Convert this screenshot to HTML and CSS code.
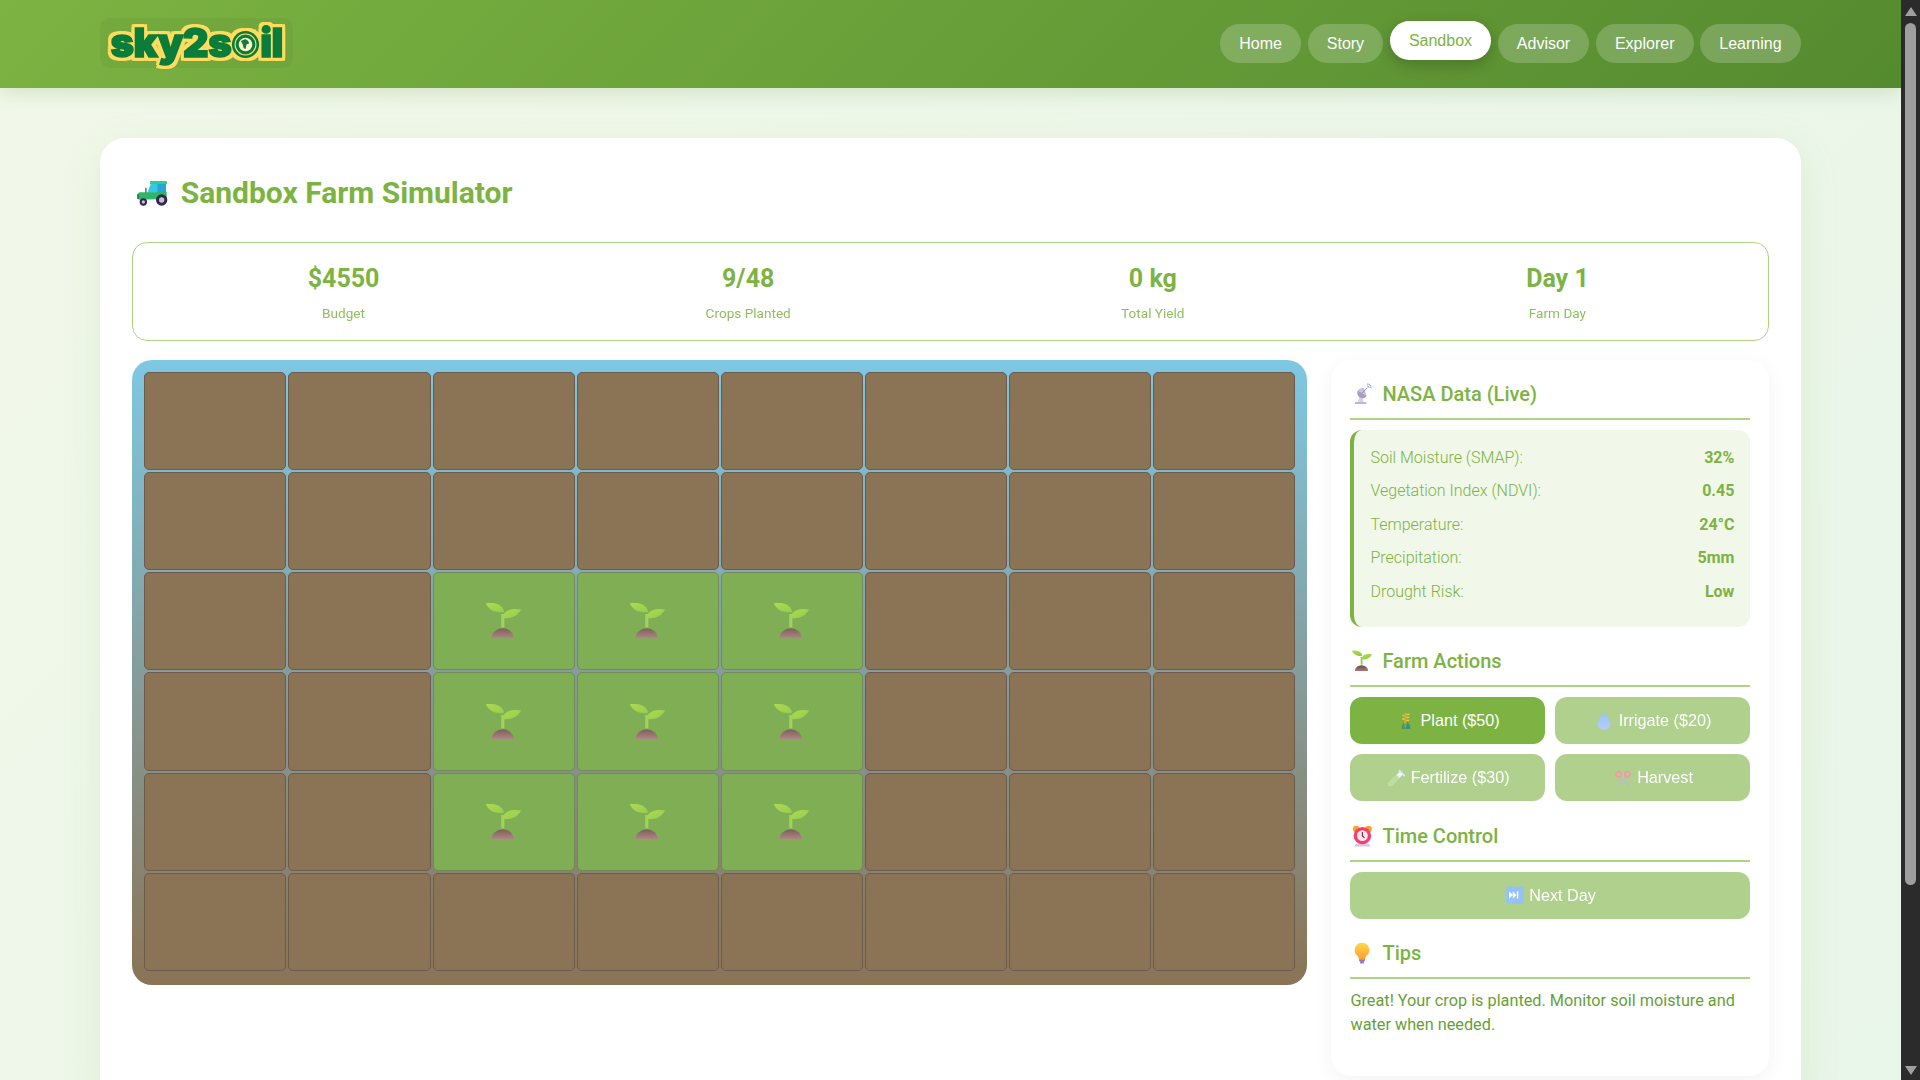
FILE: index.html
```html
<!DOCTYPE html>
<html lang="en">
<head>
<meta charset="utf-8">
<title>sky2soil - Sandbox</title>
<link rel="stylesheet" href="styles.css">
</head>
<body>
<svg class="defs" width="0" height="0" aria-hidden="true">
  <defs>
    <linearGradient id="leaf" x1="0" y1="0" x2="1" y2="1"><stop offset="0" stop-color="#b9e24e"/><stop offset="1" stop-color="#86c440"/></linearGradient>
    <linearGradient id="leafc" x1="0" y1="0" x2="1" y2="1"><stop offset="0" stop-color="#b4e04e"/><stop offset="1" stop-color="#98d050"/></linearGradient>
    <linearGradient id="soil" x1="0" y1="0" x2="0" y2="1"><stop offset="0" stop-color="#6a4a42"/><stop offset="1" stop-color="#a9767c"/></linearGradient>
    <linearGradient id="soilc" x1="0" y1="0" x2="0" y2="1"><stop offset="0" stop-color="#7d5757"/><stop offset="1" stop-color="#b5838e"/></linearGradient>
    <linearGradient id="bulbg" x1="0" y1="0" x2="0" y2="1"><stop offset="0" stop-color="#ffd84d"/><stop offset="1" stop-color="#ff9d2e"/></linearGradient>
    <linearGradient id="dropg" x1="0" y1="0" x2="0" y2="1"><stop offset="0" stop-color="#4aa3ef"/><stop offset="1" stop-color="#8fa8f7"/></linearGradient>
    <g id="seed">
      <path d="M15.2 24.5V11h3.2v13.5z" fill="#8ccb45"/>
      <path d="M0 0C8-1 17 1 18 9 10 10 2 7 0 0Z" fill="url(#leaf)"/>
      <path d="M35 6.5C28 5 18 6 16 15 24 16 31 14 35 6.5Z" fill="url(#leaf)"/>
      <path d="M5 35.3A11.7 11 0 0 1 28.3 35.3Z" fill="url(#soil)"/>
    </g>
    <g id="seedc">
      <path d="M15.2 24.5V11h3.2v13.5z" fill="#a4d65c"/>
      <path d="M0 0C8-1 17 1 18 9 10 10 2 7 0 0Z" fill="url(#leafc)"/>
      <path d="M35 6.5C28 5 18 6 16 15 24 16 31 14 35 6.5Z" fill="url(#leafc)"/>
      <path d="M5 35.3A11.7 11 0 0 1 28.3 35.3Z" fill="url(#soilc)"/>
    </g>
  </defs>
</svg>

<header class="topbar">
  <div class="topbar-inner">
    <a class="logo" aria-label="sky2soil"><span class="logo-text">sky2s<svg class="logo-o" viewBox="0 0 32 32"><circle cx="16" cy="16" r="15" fill="#0a7d3a"/><circle cx="16" cy="16" r="11.5" fill="none" stroke="#ffe070" stroke-width="1.2"/><circle cx="16" cy="16" r="7.5" fill="#fbf4c8"/><path d="M11 12l5-2 3 2 1 3-3 1-1 5-2-1-1-4z" fill="#0a7d3a"/></svg>il</span></a>
    <nav class="nav">
      <a class="nav-link">Home</a>
      <a class="nav-link">Story</a>
      <a class="nav-link is-active">Sandbox</a>
      <a class="nav-link">Advisor</a>
      <a class="nav-link">Explorer</a>
      <a class="nav-link">Learning</a>
    </nav>
  </div>
</header>

<main class="card">
  <h2 class="title">
    <svg class="title-icon" viewBox="0 0 150 120">
      <path d="M45 38h5v16h-5z" fill="#6f7f8f"/>
      <path d="M60 18h50l2 9H60z" fill="#2ecf8e"/>
      <path d="M62 27h46v26H52z" fill="#35c9e8"/>
      <path d="M82 27h26v26H82z" fill="#27a6d8"/>
      <path d="M28 52h52l3-2h27v23H82L28 74 22 70V58z" fill="#2fb56a"/>
      <path d="M22 58h5v14h-5z" fill="#17804f"/>
      <circle cx="95" cy="75" r="17" fill="#332849"/><circle cx="95" cy="75" r="8" fill="#c9bfdc"/>
      <circle cx="40" cy="81" r="11" fill="#332849"/><circle cx="40" cy="81" r="5" fill="#c9bfdc"/>
    </svg>
    Sandbox Farm Simulator
  </h2>

  <section class="stats">
    <div class="stat"><div class="stat-value">$4550</div><div class="stat-label">Budget</div></div>
    <div class="stat"><div class="stat-value">9/48</div><div class="stat-label">Crops Planted</div></div>
    <div class="stat"><div class="stat-value">0 kg</div><div class="stat-label">Total Yield</div></div>
    <div class="stat"><div class="stat-value">Day 1</div><div class="stat-label">Farm Day</div></div>
  </section>

  <div class="workspace">
    <section class="farm">
      <div class="plot"></div><div class="plot"></div><div class="plot"></div><div class="plot"></div><div class="plot"></div><div class="plot"></div><div class="plot"></div><div class="plot"></div>
      <div class="plot"></div><div class="plot"></div><div class="plot"></div><div class="plot"></div><div class="plot"></div><div class="plot"></div><div class="plot"></div><div class="plot"></div>
      <div class="plot"></div><div class="plot"></div>
      <div class="plot is-planted"><svg class="crop" viewBox="0 0 35 36"><use href="#seedc"/></svg></div>
      <div class="plot is-planted"><svg class="crop" viewBox="0 0 35 36"><use href="#seedc"/></svg></div>
      <div class="plot is-planted"><svg class="crop" viewBox="0 0 35 36"><use href="#seedc"/></svg></div>
      <div class="plot"></div><div class="plot"></div><div class="plot"></div>
      <div class="plot"></div><div class="plot"></div>
      <div class="plot is-planted"><svg class="crop" viewBox="0 0 35 36"><use href="#seedc"/></svg></div>
      <div class="plot is-planted"><svg class="crop" viewBox="0 0 35 36"><use href="#seedc"/></svg></div>
      <div class="plot is-planted"><svg class="crop" viewBox="0 0 35 36"><use href="#seedc"/></svg></div>
      <div class="plot"></div><div class="plot"></div><div class="plot"></div>
      <div class="plot"></div><div class="plot"></div>
      <div class="plot is-planted"><svg class="crop" viewBox="0 0 35 36"><use href="#seedc"/></svg></div>
      <div class="plot is-planted"><svg class="crop" viewBox="0 0 35 36"><use href="#seedc"/></svg></div>
      <div class="plot is-planted"><svg class="crop" viewBox="0 0 35 36"><use href="#seedc"/></svg></div>
      <div class="plot"></div><div class="plot"></div><div class="plot"></div>
      <div class="plot"></div><div class="plot"></div><div class="plot"></div><div class="plot"></div><div class="plot"></div><div class="plot"></div><div class="plot"></div><div class="plot"></div>
    </section>

    <aside class="panel">
      <h3 class="panel-title">
        <svg class="head-icon" viewBox="18 21 72 72">
          <path d="M33 81h34v6H33z" fill="#c3b4dc"/>
          <path d="M47 62h8l3 19H42z" fill="#d9d0ea"/>
          <path d="M42 46C36 56 42 68 54 70 62 70 66 66 68 62Z" fill="#a99dc4"/>
          <path d="M42 46 68 62 60 40C55 38 46 40 42 46Z" fill="#c9c0dc"/>
          <path d="M55 54 70 38" stroke="#8578a5" stroke-width="2.5"/>
          <path d="M69 27a11 11 0 0 1 12 12" fill="none" stroke="#5c9df5" stroke-width="2.5"/>
          <path d="M69 33a5 5 0 0 1 6 6" fill="none" stroke="#5c9df5" stroke-width="2.5"/>
        </svg>
        NASA Data (Live)
      </h3>
      <div class="data-box">
        <div class="data-row"><span class="data-label">Soil Moisture (SMAP):</span><span class="data-value">32%</span></div>
        <div class="data-row"><span class="data-label">Vegetation Index (NDVI):</span><span class="data-value">0.45</span></div>
        <div class="data-row"><span class="data-label">Temperature:</span><span class="data-value">24°C</span></div>
        <div class="data-row"><span class="data-label">Precipitation:</span><span class="data-value">5mm</span></div>
        <div class="data-row"><span class="data-label">Drought Risk:</span><span class="data-value">Low</span></div>
      </div>

      <h3 class="panel-title">
        <svg class="head-icon" viewBox="-3 -3 41 42"><use href="#seed"/></svg>
        Farm Actions
      </h3>
      <div class="actions">
        <button class="action is-selected">
          <svg class="btn-icon" viewBox="47 22 60 60">
            <path d="M72 28h6v30h-6z" fill="#e5a536"/>
            <path d="M78 30h10v4H78zM78 39h9v4h-9zM78 48h8v4h-8zM66 34h6v4h-6zM66 44h6v4h-6z" fill="#f6c945"/>
            <path d="M64 76c0-10 2-16 6-20l6 20z" fill="#4f9a55"/>
            <path d="M90 76c0-10-3-18-9-22l-6 22z" fill="#3f8c8c"/>
          </svg>
          Plant ($50)
        </button>
        <button class="action">
          <svg class="btn-icon" viewBox="642 21 60 60"><path d="M672 25C672 25 652 50 652 58A20 19 0 0 0 692 58C692 50 672 25 672 25Z" fill="url(#dropg)"/></svg>
          Irrigate ($20)
        </button>
        <button class="action">
          <svg class="btn-icon" viewBox="20 192 60 60">
            <path d="M63 210 33 240" stroke="#e6f1f4" stroke-width="13" stroke-linecap="round"/>
            <path d="M52 221 33 240" stroke="#7fd05e" stroke-width="13" stroke-linecap="round"/>
            <path d="M60 200 75 215" stroke="#bfe4f5" stroke-width="5" stroke-linecap="round"/>
          </svg>
          Fertilize ($30)
        </button>
        <button class="action">
          <svg class="btn-icon" viewBox="696 192 60 60">
            <path d="M716 219 745 246M736 219 707 246" stroke="#8d8fa8" stroke-width="4"/>
            <circle cx="713" cy="211" r="8" fill="none" stroke="#f4506f" stroke-width="5"/>
            <circle cx="739" cy="211" r="8" fill="none" stroke="#f4506f" stroke-width="5"/>
          </svg>
          Harvest
        </button>
      </div>

      <h3 class="panel-title">
        <svg class="head-icon" viewBox="25 13 66 66">
          <circle cx="42" cy="27" r="9" fill="#f5a623"/><circle cx="76" cy="27" r="9" fill="#f5a623"/>
          <path d="M40 68h38l3 7H37z" fill="#d6c6ea"/>
          <circle cx="59" cy="45" r="24" fill="#f43f6b"/>
          <circle cx="59" cy="45" r="15" fill="#fde4ec"/>
          <path d="M59 35v11l6 5" fill="none" stroke="#6a2b3f" stroke-width="3"/>
        </svg>
        Time Control
      </h3>
      <div class="actions">
        <button class="action action-wide">
          <svg class="btn-icon" viewBox="483 201 54 54">
            <rect x="486" y="205" width="48" height="47" rx="5" fill="#4f9bf0"/>
            <path d="M494 218l10 10-10 10zM504 218l10 10-10 10z" fill="#fff"/><rect x="515" y="218" width="4" height="20" fill="#fff"/>
          </svg>
          Next Day
        </button>
      </div>

      <h3 class="panel-title">
        <svg class="head-icon" viewBox="24 367 66 66">
          <path d="M57 372a20 20 0 0 1 12 36c-3 3-3 6-4 9H49c-1-3-1-6-4-9a20 20 0 0 1 12-36z" fill="url(#bulbg)"/>
          <path d="M49 417h16v4l-3 3v5H52v-5l-3-3z" fill="#9876bb"/>
        </svg>
        Tips
      </h3>
      <p class="tip">Great! Your crop is planted. Monitor soil moisture and water when needed.</p>
    </aside>
  </div>
</main>

<div class="scrollbar" aria-hidden="true">
  <svg class="scroll-arrow" viewBox="0 0 12 9"><path d="M6 0l6 9H0z" fill="#a0a0a0"/></svg>
  <div class="scroll-thumb"></div>
  <svg class="scroll-arrow" viewBox="0 0 12 9"><path d="M0 0h12L6 9z" fill="#a0a0a0"/></svg>
</div>
</body>
</html>
```

FILE: styles.css
```css
* { box-sizing: border-box; }

body {
  margin: 0;
  min-height: 1305px;
  padding-right: 19px;
  font-family: Roboto, "Noto Sans", sans-serif;
  line-height: 1.6;
  color: #7cb342;
  background: linear-gradient(135deg, #f1f8e9 0%, #e8f5e9 100%);
}

.defs { position: absolute; }

/* browser scrollbar, dark theme */
.scrollbar {
  position: fixed;
  top: 0;
  right: 0;
  bottom: 0;
  width: 19px;
  padding: 7px 0 5px;
  display: flex;
  flex-direction: column;
  align-items: center;
  background: #2b2b2b;
}
.scroll-arrow {
  width: 12px;
  height: 9px;
  flex: none;
}
.scroll-thumb {
  width: 11px;
  height: 862px;
  margin-top: 7px;
  margin-bottom: auto;
  border-radius: 6px;
  background: #9f9f9f;
}

/* top bar */
.topbar {
  height: 88px;
  background: linear-gradient(135deg, #7cb342 0%, #558b2f 100%);
  box-shadow: 0 4px 20px rgba(85, 139, 47, 0.2);
}
.topbar-inner {
  max-width: 1700.5px;
  height: 100%;
  margin: 0 auto;
  display: flex;
  align-items: center;
  justify-content: space-between;
}
.logo {
  display: flex;
  align-items: center;
  justify-content: center;
  width: 193px;
  height: 50px;
  margin-top: -3px;
  border-radius: 10px;
  background: rgba(60, 90, 30, 0.08);
}
.logo-text {
  font-family: Inter, Roboto, sans-serif;
  font-weight: 900;
  font-size: 40px;
  line-height: 50px;
  letter-spacing: -0.5px;
  color: #0a7d3a;
  -webkit-text-stroke: 1.5px #0a7d3a;
  white-space: nowrap;
  filter: drop-shadow(3px 0 0 #ffdc5e) drop-shadow(-3px 0 0 #ffdc5e) drop-shadow(0 3px 0 #ffdc5e) drop-shadow(0 -3px 0 #ffdc5e);
}
.logo-o {
  width: 29px;
  height: 29px;
  vertical-align: -2px;
}
.nav {
  display: flex;
  align-items: center;
  gap: 6.4px;
  margin-top: -1px;
}
.nav-link {
  padding: 7px 19.2px 5px;
  height: 39px;
  border-radius: 25px;
  font-family: "Liberation Sans", Arial, sans-serif;
  font-size: 16px;
  line-height: 25px;
  color: #fff;
  background: rgba(255, 255, 255, 0.2);
}
.nav-link.is-active {
  color: #7cb342;
  background: #fff;
  transform: translateY(-3px);
  box-shadow: 0 5px 15px rgba(0, 0, 0, 0.2);
}

/* main card */
.card {
  max-width: 1700.5px;
  margin: 50px auto 0;
  padding: 32px;
  background: #fff;
  border-radius: 25px;
  box-shadow: 0 10px 40px rgba(124, 179, 66, 0.12);
}
.title {
  display: flex;
  align-items: center;
  margin: 0 0 26px;
  font-size: 30px;
  font-weight: 700;
  line-height: 46px;
  color: #7cb342;
}
.title-icon {
  width: 50px;
  height: 40px;
  margin: 4px 1px 0 -2.5px;
}

.stats {
  display: grid;
  grid-template-columns: repeat(4, 1fr);
  gap: 16px;
  padding: 17px 16px 15px;
  margin-bottom: 18.5px;
  text-align: center;
  border: 1px solid #aed581;
  border-radius: 15px;
}
.stat-value {
  font-size: 25px;
  font-weight: 700;
  line-height: 38.4px;
}
.stat-label {
  margin-top: 5px;
  font-size: 13.6px;
  line-height: 21.8px;
  opacity: 0.85;
}

.workspace {
  display: grid;
  grid-template-columns: 1fr 437.5px;
  gap: 24px;
  align-items: start;
}

.farm {
  display: grid;
  grid-template-columns: repeat(8, 1fr);
  grid-auto-rows: 98.25px;
  gap: 2px;
  padding: 12px 12px 13.5px;
  border-radius: 20px;
  background: linear-gradient(180deg, #7ec8e3 0%, #8b7355 100%);
}
.plot {
  display: flex;
  align-items: center;
  justify-content: center;
  background: #8b7355;
  border: 1px solid #6d5a4c;
  border-radius: 5px;
}
.plot.is-planted {
  background: #7fae55;
  border-color: #73895a;
}
.crop {
  width: 35px;
  height: 36px;
  opacity: 0.9;
}

.panel {
  padding: 18px 18.4px 19.2px 19.2px;
  background: #fff;
  border-radius: 20px;
  box-shadow: 0 5px 20px rgba(0, 0, 0, 0.05);
}
.panel-title {
  display: flex;
  align-items: center;
  gap: 8px;
  margin: 18.4px 0 10px;
  padding-bottom: 8px;
  font-size: 20px;
  font-weight: 500;
  line-height: 32px;
  color: #7cb342;
  border-bottom: 2px solid #aed581;
}
.panel-title:first-child { margin-top: 0; }
.head-icon {
  width: 24px;
  height: 24px;
  flex: none;
}

.data-box {
  padding: 15px 16px 14.4px;
  background: #f1f8e9;
  border-left: 4px solid #7cb342;
  border-radius: 12px;
}
.data-row {
  display: flex;
  justify-content: space-between;
  margin-bottom: 8px;
  font-size: 16px;
  line-height: 25.6px;
}
.data-label { font-weight: 300; }
.data-value { font-weight: 700; }

.actions {
  display: grid;
  grid-template-columns: 1fr 1fr;
  gap: 10px;
}
.action {
  display: flex;
  align-items: center;
  justify-content: center;
  gap: 4.4px;
  height: 47px;
  padding: 0;
  font-family: "Liberation Sans", Arial, sans-serif;
  font-size: 16.2px;
  color: #fff;
  background: #7cb342;
  border: 0;
  border-radius: 12px;
  opacity: 0.6;
}
.action.is-selected { opacity: 1; }
.action-wide { grid-column: 1 / -1; }
.btn-icon {
  width: 20px;
  height: 20px;
  flex: none;
}

.tip {
  margin: 0 0 19.2px;
  font-size: 16.25px;
  line-height: 24px;
  color: #689f38;
}
```
